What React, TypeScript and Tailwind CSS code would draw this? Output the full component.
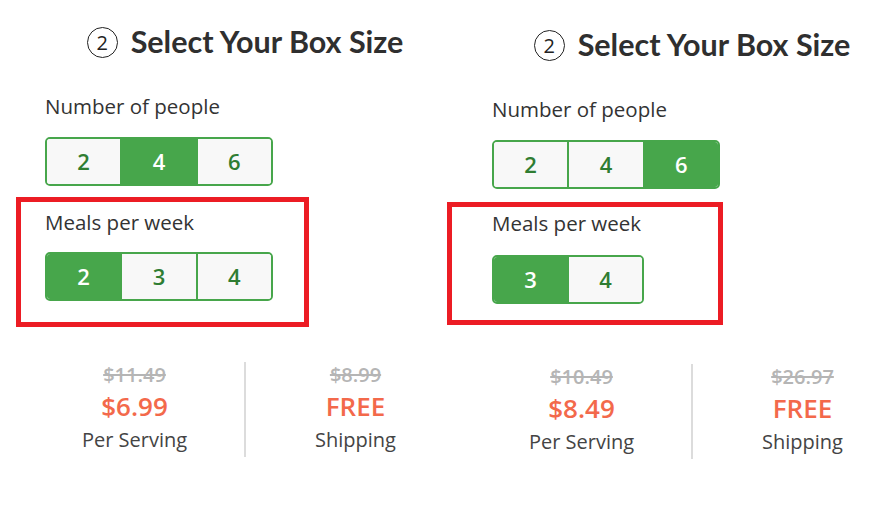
import React from 'react';

type Col = {
  people: number[];
  activePeople: number;
  meals: number[];
  activeMeal: number;
  oldPrice: string;
  price: string;
  oldShipping: string;
  top: string;
  boxGap: string;
  boxClass: string;
  labelPad: string;
  mealsGap: string;
  boxBottom: string;
  pricesGap: string;
};

const Segments: React.FC<{ items: number[]; active: number }> = ({ items, active }) => (
  <div
    className="flex h-[49px] rounded-[5px] border-2 border-[#47a64b] overflow-hidden"
    style={{ width: items.length * 76 }}
  >
    {items.map((n, i) => (
      <button
        key={n}
        className={`flex-1 flex items-center justify-center text-[22px] font-semibold ${
          i > 0 ? 'border-l-2 border-[#47a64b]' : ''
        } ${n === active ? 'bg-[#47a64b] text-white' : 'bg-[#f8f8f8] text-[#2f7d32]'}`}
      >
        {n}
      </button>
    ))}
  </div>
);

const PriceCell: React.FC<{ old: string; now: string; label: string }> = ({ old, now, label }) => (
  <div className="w-[219px] shrink-0 flex flex-col items-center">
    <span className="text-[20px] leading-[26px] font-semibold text-[#b5b5b5] line-through">{old}</span>
    <span className="text-[26px] leading-[36px] font-semibold text-[#f3694b]">{now}</span>
    <span className="mt-[2px] text-[20px] leading-[28px] text-[#444]">{label}</span>
  </div>
);

const Column: React.FC<{ c: Col }> = ({ c }) => (
  <div className={`w-[447px] shrink-0 ${c.top}`}>
    {/* Heading */}
    <div className="ml-[45px] w-[400px] flex items-center justify-center h-[31px]">
      <span className="w-[31px] h-[31px] shrink-0 rounded-full border-[1.5px] border-[#222] flex items-center justify-center text-[20px] text-[#222] leading-none">
        2
      </span>
      <h2
        className="ml-[13px] text-[30.5px] font-bold text-[#2f2f2f] leading-none -mt-[3px]"
        style={{ fontFamily: 'Lato, "Open Sans", sans-serif' }}
      >
        Select Your Box Size
      </h2>
    </div>

    <div className="ml-[45px]">
      <p className="mt-[35px] text-[20.5px] leading-[26px] font-medium text-[#333]">Number of people</p>
      <div className="mt-[18px]">
        <Segments items={c.people} active={c.activePeople} />
      </div>
    </div>

    {/* Meals */}
    <div className={`${c.boxGap} ${c.boxClass} border-[5px] border-[#ec1c24] ${c.boxBottom}`}>
      <p className={`${c.labelPad} text-[20.5px] leading-[26px] font-medium text-[#333]`}>Meals per week</p>
      <div className={c.mealsGap}>
        <Segments items={c.meals} active={c.activeMeal} />
      </div>
    </div>

    {/* Prices */}
    <div className={`${c.pricesGap} ml-[25px] flex h-[95px]`}>
      <PriceCell old={c.oldPrice} now={c.price} label="Per Serving" />
      <div className="w-[2px] shrink-0 bg-[#dcdcdc]" />
      <PriceCell old={c.oldShipping} now="FREE" label="Shipping" />
    </div>
  </div>
);

const columns: Col[] = [
  {
    people: [2, 4, 6],
    activePeople: 4,
    meals: [2, 3, 4],
    activeMeal: 2,
    oldPrice: '$11.49',
    price: '$6.99',
    oldShipping: '$8.99',
    top: 'pt-[27px]',
    boxGap: 'mt-[11px]',
    boxClass: 'ml-[16px] w-[293px] pl-[24px]',
    labelPad: 'pt-[7px]',
    mealsGap: 'mt-[17px]',
    boxBottom: 'pb-[21px]',
    pricesGap: 'mt-[35px]',
  },
  {
    people: [2, 4, 6],
    activePeople: 6,
    meals: [3, 4],
    activeMeal: 3,
    oldPrice: '$10.49',
    price: '$8.49',
    oldShipping: '$26.97',
    top: 'pt-[30px]',
    boxGap: 'mt-[13px]',
    boxClass: 'ml-[0px] w-[276px] pl-[40px]',
    labelPad: 'pt-[3px]',
    mealsGap: 'mt-[19px]',
    boxBottom: 'pb-[16px]',
    pricesGap: 'mt-[39px]',
  },
];

export default function App() {
  return (
    <div
      className="w-[894px] h-[520px] bg-white flex overflow-hidden"
      style={{ fontFamily: '"Open Sans", sans-serif' }}
    >
      {columns.map((c, i) => (
        <Column key={i} c={c} />
      ))}
    </div>
  );
}
